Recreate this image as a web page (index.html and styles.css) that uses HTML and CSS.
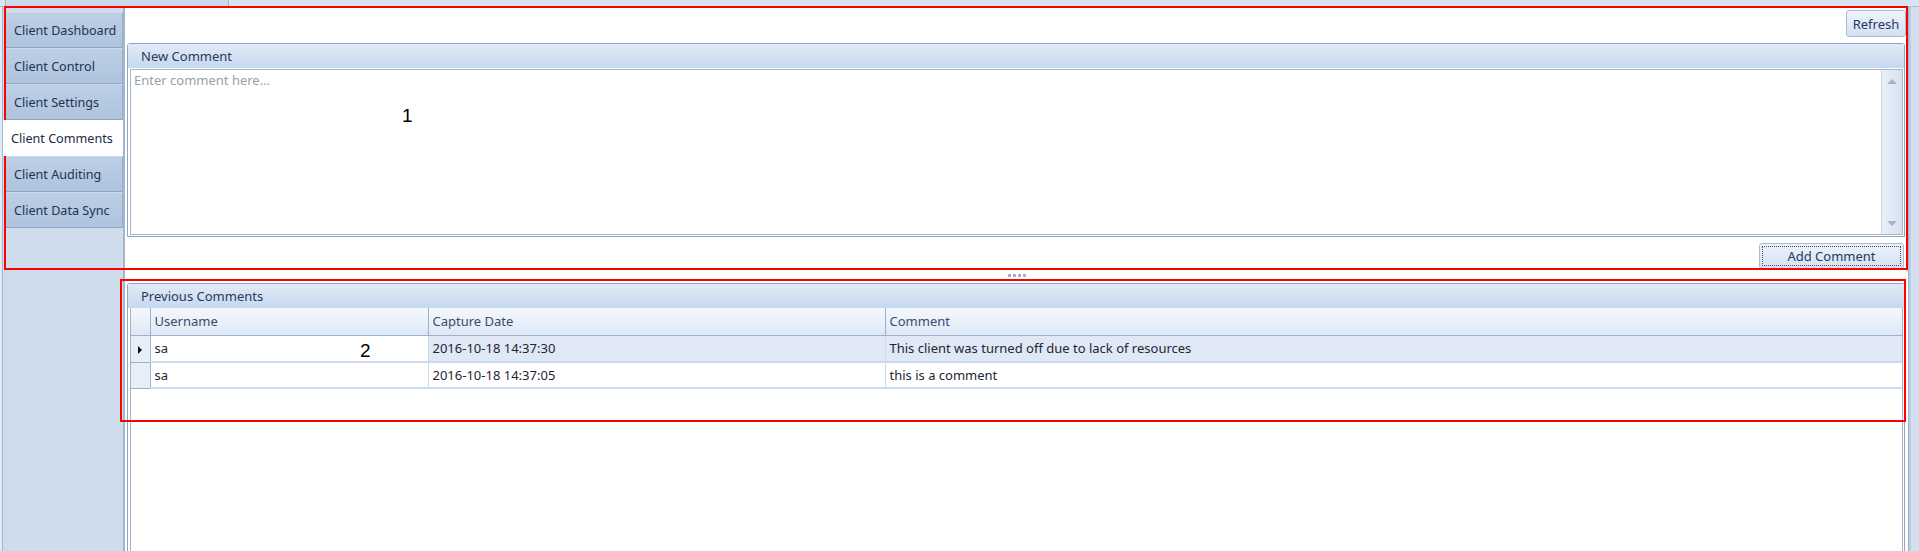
FILE: index.html
```html
<!DOCTYPE html>
<html>
<head>
<meta charset="utf-8">
<title>Client Comments</title>
<link rel="stylesheet" href="styles.css">
</head>
<body>
<div class="app">
  <div class="topstrip"><div class="toptab"></div></div>
  <div class="main">
    <nav class="nav">
      <div class="tab">Client Dashboard</div>
      <div class="tab">Client Control</div>
      <div class="tab">Client Settings</div>
      <div class="tab tab-active">Client Comments</div>
      <div class="tab">Client Auditing</div>
      <div class="tab">Client Data Sync</div>
    </nav>
    <div class="content">
      <div class="toolbar"><button class="btn btn-refresh">Refresh</button></div>
      <section class="group group-new">
        <div class="group-head">New Comment</div>
        <div class="memo">
          <div class="memo-text">Enter comment here…</div>
          <div class="vscroll">
            <span class="arrow arrow-up"></span>
            <span class="arrow arrow-down"></span>
          </div>
        </div>
      </section>
      <div class="actions"><button class="btn btn-add"><span class="focus">Add Comment</span></button></div>
      <div class="splitter"><span class="dot"></span><span class="dot"></span><span class="dot"></span><span class="dot"></span></div>
      <section class="group group-prev">
        <div class="group-head">Previous Comments</div>
        <div class="grid">
          <table>
            <colgroup>
              <col class="c-ind"><col class="c-user"><col class="c-date"><col>
            </colgroup>
            <thead>
              <tr><th class="ind"></th><th>Username</th><th>Capture Date</th><th>Comment</th></tr>
            </thead>
            <tbody>
              <tr class="row-focused">
                <td class="ind"><span class="tri"></span></td>
                <td class="cell-focused">sa</td>
                <td>2016-10-18 14:37:30</td>
                <td>This client was turned off due to lack of resources</td>
              </tr>
              <tr class="row-2">
                <td class="ind"></td>
                <td>sa</td>
                <td>2016-10-18 14:37:05</td>
                <td>this is a comment</td>
              </tr>
            </tbody>
          </table>
        </div>
      </section>
    </div>
    <div class="rightframe"></div>
  </div>
  <div class="annot annot1"></div>
  <div class="annot annot2"></div>
  <span class="label label1">1</span>
  <span class="label label2">2</span>
</div>
</body>
</html>
```

FILE: styles.css
```css
* { box-sizing: border-box; }
html, body { margin: 0; padding: 0; }
body {
  width: 1919px;
  height: 551px;
  overflow: hidden;
  background: #ffffff;
  font-family: "Noto Sans", "Open Sans", sans-serif;
  font-size: 13px;
  color: #1f2d45;
}
.app {
  position: relative;
  width: 1919px;
  height: 551px;
  display: flex;
  flex-direction: column;
}
.topstrip {
  height: 7px;
  background: #d9e4f2;
  border-bottom: 1px solid #aabdd6;
  display: flex;
  padding-left: 5px;
  flex: none;
}
.toptab {
  width: 224px;
  height: 6px;
  background: #cad9ec;
  border-right: 1px solid #9fb3cd;
  border-left: 1px solid #9fb3cd;
}
.main {
  flex: 1;
  display: flex;
  min-height: 0;
}
.nav {
  width: 125px;
  flex: none;
  background: #cfdcec;
  padding: 5px 0 0 5px;
  border-right: 2px solid #a3b6cf;
  box-shadow: inset 2px 0 0 #e2eaf5, inset 3px 0 0 #a3b6cf;
  display: flex;
  flex-direction: column;
  font-size: 12.6px;
}
.tab {
  height: 36px;
  width: 118px;
  display: flex;
  align-items: center;
  padding-left: 9px;
  background: linear-gradient(#bdcfe5, #afc3dd);
  border-top: 1px solid #cbd9ec;
  border-bottom: 1px solid #8ea6c6;
  border-right: 1px solid #97adcb;
  color: #223352;
  white-space: nowrap;
}
.tab-active {
  background: #ffffff;
  border: none;
  width: 120px;
  margin-left: -2px;
  padding-left: 8px;
  position: relative;
  z-index: 1;
  color: #1c2a44;
}
.content {
  flex: 1;
  min-width: 0;
  display: flex;
  flex-direction: column;
  padding: 3px 2px 0 2px;
  background: #ffffff;
}
.rightframe {
  width: 11px;
  flex: none;
  background: #d3e0f0;
  border-left: 1px solid #9fb3cd;
  box-shadow: inset 2px 0 0 #bccde3, inset -8px 0 0 #d3e0f0, inset -9px 0 0 #a9bcd5;
}
.toolbar {
  display: flex;
  justify-content: flex-end;
  flex: none;
}
.btn {
  font-family: "Noto Sans", "Open Sans", sans-serif;
  font-size: 13px;
  color: #233a5f;
  background: linear-gradient(#edf3fb, #d4e1f2);
  border: 1px solid #a8bcd6;
  border-radius: 3px;
  padding: 0;
  display: flex;
  align-items: center;
  justify-content: center;
}
.btn-refresh {
  width: 60px;
  height: 27px;
}
.group {
  border: 1px solid #8ea7c7;
  border-radius: 3px 3px 0 0;
  display: flex;
  flex-direction: column;
  margin-right: 1px;
}
.group-head {
  height: 24px;
  flex: none;
  display: flex;
  align-items: center;
  padding-left: 13px;
  background: linear-gradient(#e1ebf7, #c6d8ef);
  color: #263a5c;
}
.group-new {
  margin-top: 6px;
  height: 194px;
  flex: none;
}
.memo {
  flex: 1;
  margin: 1px 1px 1px 2px;
  border: 1px solid #a3b6d0;
  display: flex;
  background: #ffffff;
}
.memo-text {
  flex: 1;
  padding: 1px 3px;
  color: #979fab;
}
.vscroll {
  width: 21px;
  flex: none;
  background: linear-gradient(90deg, #e8eff8, #d8e3f1);
  border-left: 1px solid #c9d6e7;
  display: flex;
  flex-direction: column;
  justify-content: space-between;
  align-items: center;
  padding: 9px 0 8px;
}
.arrow {
  width: 0;
  height: 0;
  border-left: 5px solid transparent;
  border-right: 5px solid transparent;
}
.arrow-up { border-bottom: 5px solid #a8b5c6; }
.arrow-down { border-top: 5px solid #a8b5c6; }
.actions {
  display: flex;
  justify-content: flex-end;
  margin-top: 6px;
  flex: none;
}
.btn-add {
  width: 145px;
  height: 26px;
  margin-right: 2px;
  padding: 2px;
}
.focus {
  flex: 1;
  align-self: stretch;
  border: 1px dotted #4a4f58;
  display: flex;
  align-items: center;
  justify-content: center;
}
.splitter {
  height: 14px;
  flex: none;
  display: flex;
  justify-content: center;
  align-items: center;
  gap: 2px;
  padding-bottom: 1px;
}
.dot {
  width: 3px;
  height: 3px;
  background: #9fb1c9;
}
.group-prev {
  flex: 1;
  min-height: 0;
  border-bottom: none;
}
.grid {
  flex: 1;
  margin: 0 1px 0 2px;
  border-left: 1px solid #9fb3cd;
  border-right: 1px solid #9fb3cd;
  background: #ffffff;
}
table {
  width: 100%;
  border-collapse: collapse;
  table-layout: fixed;
}
.c-ind { width: 19px; }
.c-user { width: 278px; }
.c-date { width: 457px; }
th {
  height: 27px;
  padding: 0 0 0 4px;
  text-align: left;
  font-weight: normal;
  color: #3a4c6b;
  background: linear-gradient(#f4f8fd, #dde8f5);
  border-right: 1px solid #9db1cd;
  border-bottom: 1px solid #9db1cd;
  white-space: nowrap;
}
th:last-child { border-right: none; }
td {
  height: 26px;
  padding: 0 0 0 4px;
  border-right: 1px solid #cbdaee;
  border-bottom: 2px solid #cbdaee;
  color: #1e2634;
  white-space: nowrap;
}
td:last-child { border-right: none; }
.row-focused td { background: #dfe8f4; height: 27px; }
.row-focused td.cell-focused { background: #ffffff; }
th.ind, td.ind, .row-focused td.ind {
  background: #e6eef8;
  border-right: 1px solid #9db1cd;
  border-bottom: 1px solid #9db1cd;
  padding: 0;
  text-align: center;
}
th.ind { background: linear-gradient(#f4f8fd, #dde8f5); }
.tri {
  display: inline-block;
  width: 0;
  height: 0;
  border-top: 4px solid transparent;
  border-bottom: 4px solid transparent;
  border-left: 4px solid #111111;
  vertical-align: middle;
}
.annot {
  position: absolute;
  border: 2px solid #ff0000;
  pointer-events: none;
}
.annot1 { left: 4px; top: 6px; width: 1904px; height: 264px; }
.annot2 { left: 120px; top: 279px; width: 1786px; height: 143px; }
.label {
  position: absolute;
  font-family: "Liberation Sans", Arial, sans-serif;
  font-size: 19px;
  line-height: 20px;
  color: #000000;
}
.label1 { left: 402px; top: 106px; }
.label2 { left: 360px; top: 341px; }
```
